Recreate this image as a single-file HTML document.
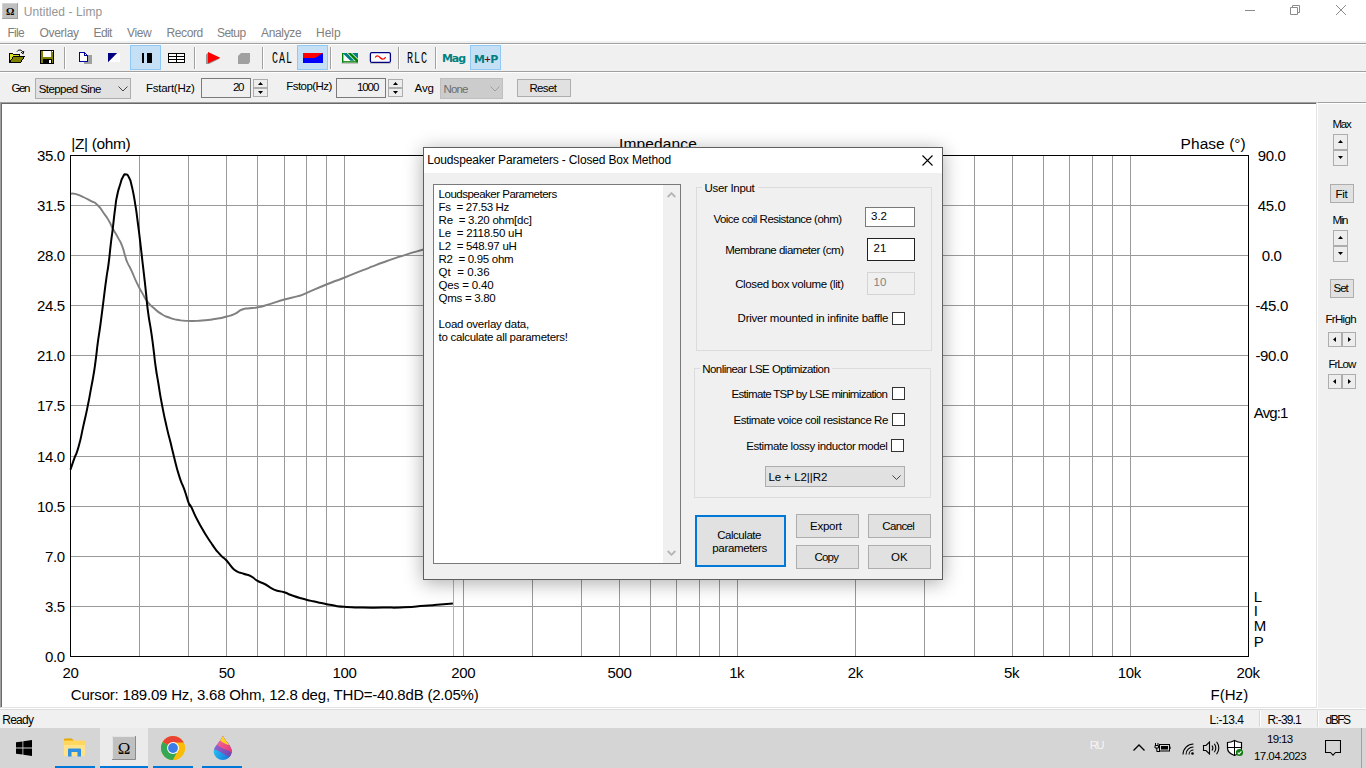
<!DOCTYPE html>
<html lang="en"><head><meta charset="utf-8"><title>Untitled - Limp</title>
<style>
html,body{margin:0;padding:0}
body{width:1366px;height:768px;overflow:hidden;position:relative;background:#f0f0f0;font-family:"Liberation Sans",sans-serif;color:#000}
div,span,svg{position:absolute;box-sizing:border-box}
.t{line-height:0;white-space:pre}
.btn{background:#e1e1e1;border:1px solid #adadad}
.spin{background:#ededed}
.sep{width:1px;background:#a0a0a0;border-right:1px solid #fff;box-sizing:content-box}
.pressed{background:#c5dff4;border:1px solid #90c8f6}
.edit{background:#fff;border:1px solid #7a7a7a}
.chk{width:13px;height:13px;background:#fff;border:1px solid #333}
.grp{border:1px solid #dcdcdc}
</style></head><body>

<div id="titlebar" style="left:0;top:0;width:1366px;height:22px;background:#fff">
<svg style="left:2px;top:3px" width="16" height="16" viewBox="0 0 16 16"><rect width="16" height="16" fill="#c0c0c0"/><path d="M0 16V0H16" fill="none" stroke="#dfdfdf" stroke-width="1"/><path d="M16 0V16H0" fill="none" stroke="#808080" stroke-width="1"/><text x="8.1" y="12" font-family="Liberation Serif,serif" font-size="10.5" font-weight="bold" text-anchor="middle" fill="#000">Ω</text></svg>
<span class="t" style="left:23.80px;top:12px;font-size:12px;letter-spacing:0.072px;color:#959595;">Untitled - Limp</span>
<svg style="left:1230px;top:0" width="136" height="22" viewBox="0 0 136 22" fill="none" stroke="#8c8c8c" stroke-width="1"><path d="M15 10.5H25"/><path d="M60.5 7.5H67.5V14.5H60.5Z M62.5 7.5V5.5H69.5V12.5H67.5"/><path d="M106 5L116 15M116 5L106 15"/></svg>
</div>
<div id="menubar" style="left:0;top:22px;width:1366px;height:19px;background:#fff">
<span class="t" style="left:7.50px;top:11px;font-size:12px;letter-spacing:-0.721px;color:#808080;">File</span>
<span class="t" style="left:39.50px;top:11px;font-size:12px;letter-spacing:-0.307px;color:#808080;">Overlay</span>
<span class="t" style="left:93.50px;top:11px;font-size:12px;letter-spacing:-0.615px;color:#808080;">Edit</span>
<span class="t" style="left:127.00px;top:11px;font-size:12px;letter-spacing:-0.376px;color:#808080;">View</span>
<span class="t" style="left:166.50px;top:11px;font-size:12px;letter-spacing:-0.402px;color:#808080;">Record</span>
<span class="t" style="left:217.00px;top:11px;font-size:12px;letter-spacing:-0.546px;color:#808080;">Setup</span>
<span class="t" style="left:261.00px;top:11px;font-size:12px;letter-spacing:-0.336px;color:#808080;">Analyze</span>
<span class="t" style="left:316.00px;top:11px;font-size:12px;color:#808080;">Help</span>
</div>
<div id="toolbar1" style="left:0;top:43px;width:1366px;height:29px;border-top:1px solid #a0a0a0;border-bottom:1px solid #a0a0a0;background:#f0f0f0;box-shadow:inset 0 1px 0 #fff">
<div class="pressed" style="left:130px;top:1px;width:31px;height:25px;"></div>
<div class="pressed" style="left:297px;top:1px;width:31px;height:25px;"></div>
<div class="pressed" style="left:470px;top:1px;width:31px;height:25px;"></div>
<div class="sep" style="left:64px;top:3px;height:22px"></div>
<div class="sep" style="left:194px;top:3px;height:22px"></div>
<div class="sep" style="left:262px;top:3px;height:22px"></div>
<div class="sep" style="left:330px;top:3px;height:22px"></div>
<div class="sep" style="left:398px;top:3px;height:22px"></div>
<div class="sep" style="left:435px;top:3px;height:22px"></div>
<svg style="left:0;top:-1px" width="520" height="29" viewBox="0 43 520 29" shape-rendering="crispEdges">
<path d="M9.5 61.5V53.5H12.5L13.5 54.500H19.500V56.500" fill="#d8e020" stroke="#000"/><path d="M9.5 62.5L13.5 56.5H24.5L20.5 62.5Z" fill="#808000" stroke="#000"/><path d="M17 51.500C18.500 49.500 21.500 49.500 22.800 52M21 52.200L23.200 53.800L23.800 51" fill="none" stroke="#000" shape-rendering="auto"/>
<rect x="40.5" y="50.5" width="13" height="13" fill="#808000" stroke="#000"/><rect x="43" y="51" width="8" height="5.500" fill="#fff"/><rect x="43" y="58.500" width="9" height="5" fill="#000"/><rect x="49" y="59.700" width="2.200" height="3" fill="#fff"/><rect x="52" y="51" width="1" height="1" fill="#fff"/>
<rect x="83.500" y="54.500" width="8.500" height="9.500" fill="#a0a0a0"/><path d="M79.5 52.5H84.5L87.5 55.5V61.5H79.5Z" fill="#fff" stroke="#0000a0" stroke-width="1.200"/><path d="M84.5 52.5V55.5H87.5" fill="none" stroke="#0000a0"/>
<rect x="108" y="53" width="12" height="9.300" fill="#fff"/><path d="M108 53H117.200L108 62.300Z" fill="#000080" shape-rendering="auto"/>
<rect x="142" y="53" width="2.200" height="10" fill="#000"/><rect x="147.200" y="53" width="5" height="10" fill="#000"/>
<rect x="168" y="53" width="17" height="10" fill="#000"/>
<rect x="169.2" y="54.2" width="6.600" height="1.600" fill="#fff"/>
<rect x="177.39999999999998" y="54.2" width="6.600" height="1.600" fill="#fff"/>
<rect x="169.2" y="57.2" width="6.600" height="1.600" fill="#fff"/>
<rect x="177.39999999999998" y="57.2" width="6.600" height="1.600" fill="#fff"/>
<rect x="169.2" y="60.2" width="6.600" height="1.600" fill="#fff"/>
<rect x="177.39999999999998" y="60.2" width="6.600" height="1.600" fill="#fff"/>
<path d="M206 54.500L208.300 52.500L220 58.500L209 64H206Z" fill="#909898" shape-rendering="auto"/><path d="M208 52L220.300 57.700L208 63.300Z" fill="#f00" shape-rendering="auto"/>
<path d="M238 56L241 53H250V62L248.500 64H238Z" fill="#a0a0a0" shape-rendering="auto"/>
<rect x="303" y="53" width="20" height="6" fill="#f00"/><path d="M303 58H315L322 53.500H323V63H303Z" fill="#00f" shape-rendering="auto"/>
<g shape-rendering="auto"><rect x="342" y="53" width="16" height="9.500" fill="#fff"/><path d="M342.500 53H346.800L354.500 60.800H350.300Z" fill="#008080"/><path d="M352 53H358V58.800Z" fill="#008080"/><path d="M347.800 53H351L358 59.800V62.600H357Z" fill="#008000"/><rect x="342" y="53" width="1.400" height="9.600" fill="#008000"/><rect x="342" y="61.200" width="16" height="1.400" fill="#008000"/><path d="M341.500 63.300H358" stroke="#a8a8a8" stroke-width="0.800"/></g>
<g shape-rendering="auto"><path d="M370 63.400H390.500" stroke="#b0b0b0" stroke-width="0.800"/><rect x="370.400" y="52.600" width="20" height="9.800" rx="1.500" fill="#fff" stroke="#000080" stroke-width="1.300"/><path d="M375.300 57.600C376.300 55.300 378 55.300 380 57.500S384 60 385.600 57" fill="none" stroke="#f00" stroke-width="1.300"/></g>
</svg>
<span class="t" style="left:271.80px;top:15px;font-size:16.5px;transform:scaleX(0.6062);transform-origin:0 0;letter-spacing:1.6px;font-family:'Liberation Mono',monospace;">CAL</span>
<span class="t" style="left:407.09px;top:15px;font-size:16.5px;transform:scaleX(0.6093);transform-origin:0 0;letter-spacing:1.6px;font-family:'Liberation Mono',monospace;">RLC</span>
<span class="t" style="left:442.00px;top:15px;font-size:11px;letter-spacing:-1.085px;color:#008080;font-weight:bold;font-family:'DejaVu Sans',sans-serif;">Mag</span>
<span class="t" style="left:473.90px;top:15px;font-size:11px;font-weight:bold;color:#008080;font-family:'DejaVu Sans',sans-serif;letter-spacing:-0.8px">M<span style="position:static;color:#800000;font-size:8.5px;vertical-align:0.5px;letter-spacing:-1px">+</span>P</span>
</div>
<div id="toolbar2" style="left:0;top:72px;width:1366px;height:30px;background:#f0f0f0;box-shadow:inset 0 1px 0 #fff">
<span class="t" style="left:11.50px;top:16px;font-size:11.5px;letter-spacing:-1.420px;">Gen</span>
<div class="btn" style="left:35px;top:6px;width:96px;height:21px;"><span class="t" style="left:2.75px;top:10px;font-size:11.5px;letter-spacing:-0.583px;">Stepped Sine</span><svg style="left:82px;top:7px" width="10" height="6" viewBox="0 0 10 6"><path d="M0.5 0.5L5 5L9.5 0.5" fill="none" stroke="#444" stroke-width="1"/></svg></div>
<span class="t" style="left:146.00px;top:16px;font-size:11.5px;letter-spacing:-0.253px;">Fstart(Hz)</span>
<div class="edit" style="left:201px;top:6px;width:50px;height:20px;background:#f0f0f0"><span class="t" style="left:31.10px;top:8px;font-size:11.5px;letter-spacing:-1.496px;">20</span></div>
<div class="btn spin" style="left:253px;top:7px;width:15px;height:9px;"><svg style="left:4px;top:2px" width="5" height="3" viewBox="0 0 5 3"><path d="M0 3L2.5 0L5 3Z" fill="#000"/></svg></div><div class="btn spin" style="left:253px;top:16px;width:15px;height:9px;"><svg style="left:4px;top:2px" width="5" height="3" viewBox="0 0 5 3"><path d="M0 0L2.5 3L5 0Z" fill="#000"/></svg></div>
<span class="t" style="left:286.25px;top:14px;font-size:11.5px;letter-spacing:-0.549px;">Fstop(Hz)</span>
<div class="edit" style="left:336px;top:6px;width:50px;height:20px;background:#f0f0f0"><span class="t" style="left:19.90px;top:8px;font-size:11.5px;letter-spacing:-1.029px;">1000</span></div>
<div class="btn spin" style="left:388px;top:7px;width:15px;height:9px;"><svg style="left:4px;top:2px" width="5" height="3" viewBox="0 0 5 3"><path d="M0 3L2.5 0L5 3Z" fill="#000"/></svg></div><div class="btn spin" style="left:388px;top:16px;width:15px;height:9px;"><svg style="left:4px;top:2px" width="5" height="3" viewBox="0 0 5 3"><path d="M0 0L2.5 3L5 0Z" fill="#000"/></svg></div>
<span class="t" style="left:414.60px;top:16px;font-size:11.5px;letter-spacing:-0.156px;">Avg</span>
<div style="left:440px;top:6px;width:63px;height:21px;background:#ccc;border:1px solid #bfbfbf"><span class="t" style="left:2.50px;top:10px;font-size:11.5px;letter-spacing:-0.832px;color:#6d6d6d;">None</span><svg style="left:49px;top:7px" width="10" height="6" viewBox="0 0 10 6"><path d="M0.5 0.5L5 5L9.5 0.5" fill="none" stroke="#a0a0a0" stroke-width="1"/></svg></div>
<div class="btn" style="left:517px;top:7px;width:54px;height:18px;"><span class="t" style="left:11.40px;top:8px;font-size:11.5px;letter-spacing:-0.624px;">Reset</span></div>
</div>
<div id="view" style="left:0;top:102px;width:1317px;height:606px;background:#fff;border-top:1px solid #a0a0a0;border-left:1px solid #a0a0a0;border-bottom:1px solid #e3e3e3;border-right:1px solid #e3e3e3;box-shadow:inset 1px 1px 0 #696969"></div>
<svg id="plot" style="left:0;top:0" width="1317" height="708" viewBox="0 0 1317 708">
<g stroke="#9a9a9a" stroke-width="1" shape-rendering="crispEdges">
<path d="M139.5 155V656"/>
<path d="M188.5 155V656"/>
<path d="M226.5 155V656"/>
<path d="M257.5 155V656"/>
<path d="M284.5 155V656"/>
<path d="M306.5 155V656"/>
<path d="M326.5 155V656"/>
<path d="M344.5 155V656"/>
<path d="M463.5 155V656"/>
<path d="M532.5 155V656"/>
<path d="M581.5 155V656"/>
<path d="M619.5 155V656"/>
<path d="M650.5 155V656"/>
<path d="M676.5 155V656"/>
<path d="M699.5 155V656"/>
<path d="M719.5 155V656"/>
<path d="M737.5 155V656"/>
<path d="M855.5 155V656"/>
<path d="M924.5 155V656"/>
<path d="M974.5 155V656"/>
<path d="M1012.5 155V656"/>
<path d="M1043.5 155V656"/>
<path d="M1069.5 155V656"/>
<path d="M1092.5 155V656"/>
<path d="M1112.5 155V656"/>
<path d="M1130.5 155V656"/>
<path d="M70 205.5H1248"/>
<path d="M70 255.5H1248"/>
<path d="M70 305.5H1248"/>
<path d="M70 355.5H1248"/>
<path d="M70 405.5H1248"/>
<path d="M70 456.5H1248"/>
<path d="M70 506.5H1248"/>
<path d="M70 556.5H1248"/>
<path d="M70 606.5H1248"/>
</g>
<path d="M70.5 193.9C72.0 193.9 71.0 192.9 75.1 193.9C79.2 194.9 77.7 194.6 82.9 196.9C88.1 199.2 85.9 198.2 90.7 200.8C95.5 203.4 92.9 200.6 97.2 204.7C101.6 208.8 99.9 207.8 103.8 213.2C107.7 218.6 106.0 215.8 109.0 221.0C112.0 226.2 109.9 223.2 112.9 228.8C115.9 234.4 115.1 232.3 118.1 237.9C121.1 243.5 119.6 239.6 122.0 245.7C124.4 251.8 123.4 250.5 125.2 256.1C127.0 261.7 125.3 257.6 127.4 262.5C129.5 267.4 128.4 263.9 131.6 270.9C134.8 277.9 133.4 275.8 137.1 283.4C140.8 291.0 139.2 287.6 142.6 293.6C146.0 299.6 143.6 296.7 147.2 301.4C150.9 306.1 148.8 303.5 153.5 307.7C158.2 311.9 156.1 310.6 161.3 313.9C166.5 317.2 163.9 315.6 169.1 317.5C174.3 319.4 170.5 318.6 176.9 319.7C183.3 320.8 179.8 320.6 188.2 320.9C196.6 321.2 192.5 321.2 202.0 320.5C211.5 319.8 208.4 320.0 216.6 318.7C224.8 317.4 220.6 318.1 226.7 316.5C232.8 314.9 229.7 316.1 234.9 313.8C240.1 311.4 237.3 311.3 242.2 309.5C247.1 307.7 244.3 309.0 249.5 308.3C254.7 307.6 251.1 308.7 257.8 307.3C264.5 305.9 260.9 306.7 269.7 304.1C278.5 301.5 275.2 302.1 284.3 299.5C293.4 296.9 289.8 298.5 297.1 296.4C304.4 294.3 296.5 297.1 306.3 293.1C316.1 289.1 313.6 289.7 326.4 284.5C339.2 279.3 332.5 282.3 344.7 277.5C356.9 272.7 352.6 274.3 363.0 270.2C373.4 266.1 366.0 268.8 375.8 265.1C385.6 261.4 381.9 262.8 392.3 259.2C402.7 255.6 396.5 257.5 406.9 254.3C417.3 251.1 412.4 252.6 423.4 249.5C434.4 246.4 434.5 246.5 440.0 245.0" fill="none" stroke="#808080" stroke-width="1.900" stroke-linejoin="round"/>
<path d="M70.5 469.6C71.6 466.3 71.1 467.6 73.8 459.8C76.5 452.0 75.6 457.3 78.7 446.2C81.8 435.1 80.3 439.6 83.2 426.6C86.1 413.6 84.9 419.8 87.5 407.1C90.1 394.4 89.0 399.3 91.0 388.6C93.0 377.9 91.9 384.5 93.5 375.0C95.1 365.5 94.2 371.2 95.7 360.0C97.2 348.8 96.3 353.8 98.0 341.2C99.7 328.8 98.9 336.1 100.7 322.5C102.5 308.9 101.6 315.2 103.5 300.6C105.4 286.0 104.5 291.6 106.3 278.8C108.1 265.9 107.3 273.9 108.8 262.0C110.3 250.1 109.5 254.6 110.9 243.1C112.3 231.6 111.5 239.2 112.9 227.5C114.3 215.8 113.8 218.4 115.2 208.0C116.6 197.6 115.4 203.9 117.0 196.2C118.6 188.5 118.0 191.4 120.0 185.0C122.0 178.6 120.9 180.5 122.9 177.0C124.9 173.5 123.8 174.1 125.9 174.4C128.0 174.7 127.1 173.9 129.1 177.8C131.0 181.7 129.8 177.9 131.8 186.2C133.7 194.5 133.1 191.2 135.0 202.8C136.9 214.4 135.9 208.0 137.6 221.0C139.3 234.0 138.6 228.1 140.2 241.8C141.8 255.5 141.2 250.7 142.5 262.0C143.8 273.3 142.9 265.3 144.1 275.6C145.3 285.9 144.7 280.8 146.0 292.8C147.3 304.8 146.3 298.6 148.0 311.6C149.7 324.6 149.4 319.4 151.2 331.9C153.0 344.4 152.0 337.3 153.5 349.0C155.0 360.7 154.1 355.7 155.7 367.0C157.3 378.3 156.2 370.3 158.3 383.0C160.4 395.7 159.3 390.7 162.1 405.2C164.9 419.7 163.8 414.2 166.6 426.6C169.4 439.0 168.1 432.5 170.5 442.3C172.9 452.1 170.9 444.5 173.8 455.9C176.7 467.3 175.8 465.3 179.3 476.4C182.8 487.5 181.0 480.0 184.2 489.1C187.4 498.2 186.7 497.9 189.0 503.8C191.3 509.7 187.6 500.1 191.1 506.8C194.6 513.5 192.7 511.7 199.5 523.9C206.3 536.1 204.6 533.2 211.4 543.3C218.2 553.4 214.9 548.6 219.9 554.3C224.9 559.9 222.4 556.0 226.3 560.2C230.2 564.5 228.2 563.3 231.7 567.0C235.2 570.7 232.8 569.0 236.8 571.3C240.8 573.6 238.8 572.1 243.6 573.8C248.4 575.5 246.7 574.0 251.2 576.3C255.7 578.6 252.3 577.9 257.1 580.6C261.9 583.3 260.0 581.5 265.6 584.5C271.2 587.5 267.8 587.0 274.0 589.6C280.2 592.2 278.5 590.5 284.2 592.3C289.9 594.1 285.4 593.0 291.0 595.0C296.6 597.0 294.3 596.3 301.1 598.3C307.9 600.3 304.5 599.3 311.3 600.9C318.1 602.5 314.6 601.7 321.4 603.1C328.2 604.5 324.1 603.9 331.6 605.1C339.1 606.3 333.8 606.0 344.0 606.8C354.2 607.6 349.3 607.3 362.3 607.6C375.3 607.9 369.2 607.7 383.1 607.6C397.0 607.5 390.1 607.9 404.0 607.3C417.9 606.7 412.7 606.7 424.8 605.8C436.9 604.9 431.0 605.3 440.4 604.5C449.8 603.7 448.7 603.8 452.9 603.4" fill="none" stroke="#000" stroke-width="2" stroke-linejoin="round"/>
<path d="M453.5 155V656" stroke="#c8c800" stroke-width="1" shape-rendering="crispEdges"/>
<rect x="70.5" y="155.5" width="1178" height="501" fill="none" stroke="#000" stroke-width="1" shape-rendering="crispEdges"/>
</svg>
<div id="plotlabels" style="left:0;top:0;width:0;height:0">
<span class="t" style="left:71.25px;top:144px;font-size:15.5px;letter-spacing:-0.349px;">|Z| (ohm)</span>
<span class="t" style="left:619.00px;top:144px;font-size:15.5px;letter-spacing:0.148px;">Impedance</span>
<span class="t" style="left:1180.60px;top:144px;font-size:15.5px;letter-spacing:0.048px;">Phase (°)</span>
<span class="t" style="left:36.95px;top:156px;font-size:15px;letter-spacing:-0.350px;">35.0</span>
<span class="t" style="left:36.95px;top:206px;font-size:15px;letter-spacing:-0.350px;">31.5</span>
<span class="t" style="left:36.95px;top:256px;font-size:15px;letter-spacing:-0.350px;">28.0</span>
<span class="t" style="left:36.95px;top:306px;font-size:15px;letter-spacing:-0.350px;">24.5</span>
<span class="t" style="left:36.95px;top:356px;font-size:15px;letter-spacing:-0.350px;">21.0</span>
<span class="t" style="left:36.95px;top:406px;font-size:15px;letter-spacing:-0.350px;">17.5</span>
<span class="t" style="left:36.95px;top:457px;font-size:15px;letter-spacing:-0.350px;">14.0</span>
<span class="t" style="left:36.95px;top:507px;font-size:15px;letter-spacing:-0.350px;">10.5</span>
<span class="t" style="left:44.94px;top:557px;font-size:15px;letter-spacing:-0.350px;">7.0</span>
<span class="t" style="left:44.94px;top:607px;font-size:15px;letter-spacing:-0.350px;">3.5</span>
<span class="t" style="left:44.94px;top:657px;font-size:15px;letter-spacing:-0.350px;">0.0</span>
<span class="t" style="left:1257.80px;top:156px;font-size:15px;letter-spacing:-0.350px;">90.0</span>
<span class="t" style="left:1257.80px;top:206px;font-size:15px;letter-spacing:-0.350px;">45.0</span>
<span class="t" style="left:1261.80px;top:256px;font-size:15px;letter-spacing:-0.350px;">0.0</span>
<span class="t" style="left:1255.48px;top:306px;font-size:15px;letter-spacing:-0.350px;">-45.0</span>
<span class="t" style="left:1255.48px;top:356px;font-size:15px;letter-spacing:-0.350px;">-90.0</span>
<span class="t" style="left:1253.80px;top:413px;font-size:15px;letter-spacing:-0.886px;">Avg:1</span>
<span class="t" style="left:1253.80px;top:597px;font-size:15px;">L</span>
<span class="t" style="left:1253.80px;top:611px;font-size:15px;">I</span>
<span class="t" style="left:1253.80px;top:626px;font-size:15px;">M</span>
<span class="t" style="left:1253.80px;top:642px;font-size:15px;">P</span>
<span class="t" style="left:62.50px;top:673px;font-size:15px;letter-spacing:-0.350px;">20</span>
<span class="t" style="left:218.76px;top:673px;font-size:15px;letter-spacing:-0.350px;">50</span>
<span class="t" style="left:332.47px;top:673px;font-size:15px;letter-spacing:-0.350px;">100</span>
<span class="t" style="left:451.17px;top:673px;font-size:15px;letter-spacing:-0.350px;">200</span>
<span class="t" style="left:607.43px;top:673px;font-size:15px;letter-spacing:-0.350px;">500</span>
<span class="t" style="left:729.13px;top:673px;font-size:15px;letter-spacing:-0.350px;">1k</span>
<span class="t" style="left:847.84px;top:673px;font-size:15px;letter-spacing:-0.350px;">2k</span>
<span class="t" style="left:1004.09px;top:673px;font-size:15px;letter-spacing:-0.350px;">5k</span>
<span class="t" style="left:1117.80px;top:673px;font-size:15px;letter-spacing:-0.350px;">10k</span>
<span class="t" style="left:1236.51px;top:673px;font-size:15px;letter-spacing:-0.350px;">20k</span>
<span class="t" style="left:70.80px;top:695px;font-size:15px;letter-spacing:-0.204px;">Cursor: 189.09 Hz, 3.68 Ohm, 12.8 deg, THD=-40.8dB (2.05%)</span>
<span class="t" style="left:1210.40px;top:695px;font-size:15px;letter-spacing:0.077px;">F(Hz)</span>
</div>
<div id="rightpanel" style="left:1317px;top:102px;width:49px;height:606px;background:#f0f0f0;border-left:1px solid #fff;border-top:1px solid #a0a0a0;box-shadow:inset 0 1px 0 #fff">
<span class="t" style="left:14.50px;top:21px;font-size:11.5px;letter-spacing:-1.238px;">Max</span>
<div class="btn spin" style="left:15px;top:31px;width:15px;height:16px;"><svg style="left:4px;top:5px" width="5" height="3" viewBox="0 0 5 3"><path d="M0 3L2.5 0L5 3Z" fill="#000"/></svg></div><div class="btn spin" style="left:15px;top:47px;width:15px;height:16px;"><svg style="left:4px;top:5px" width="5" height="3" viewBox="0 0 5 3"><path d="M0 0L2.5 3L5 0Z" fill="#000"/></svg></div>
<div class="btn" style="left:12px;top:81px;width:24px;height:19px;"><span class="t" style="left:4.60px;top:9px;font-size:11.5px;letter-spacing:-0.340px;">Fit</span></div>
<span class="t" style="left:14.50px;top:117px;font-size:11.5px;letter-spacing:-1.317px;">Min</span>
<div class="btn spin" style="left:15px;top:127px;width:15px;height:16px;"><svg style="left:4px;top:5px" width="5" height="3" viewBox="0 0 5 3"><path d="M0 3L2.5 0L5 3Z" fill="#000"/></svg></div><div class="btn spin" style="left:15px;top:143px;width:15px;height:16px;"><svg style="left:4px;top:5px" width="5" height="3" viewBox="0 0 5 3"><path d="M0 0L2.5 3L5 0Z" fill="#000"/></svg></div>
<div class="btn" style="left:12px;top:176px;width:24px;height:19px;"><span class="t" style="left:2.60px;top:8px;font-size:11.5px;letter-spacing:-1.083px;">Set</span></div>
<span class="t" style="left:7.40px;top:216px;font-size:11.5px;letter-spacing:-0.642px;">FrHigh</span>
<div class="btn spin" style="left:10px;top:229px;width:14px;height:15px;"><svg style="left:4px;top:4px" width="3" height="5" viewBox="0 0 3 5"><path d="M3 0L0 2.5L3 5Z" fill="#000"/></svg></div><div class="btn spin" style="left:24px;top:229px;width:14px;height:15px;"><svg style="left:5px;top:4px" width="3" height="5" viewBox="0 0 3 5"><path d="M0 0L3 2.5L0 5Z" fill="#000"/></svg></div>
<span class="t" style="left:10.40px;top:261px;font-size:11.5px;letter-spacing:-1.036px;">FrLow</span>
<div class="btn spin" style="left:10px;top:271px;width:14px;height:15px;"><svg style="left:4px;top:4px" width="3" height="5" viewBox="0 0 3 5"><path d="M3 0L0 2.5L3 5Z" fill="#000"/></svg></div><div class="btn spin" style="left:24px;top:271px;width:14px;height:15px;"><svg style="left:5px;top:4px" width="3" height="5" viewBox="0 0 3 5"><path d="M0 0L3 2.5L0 5Z" fill="#000"/></svg></div>
</div>
<div id="statusbar" style="left:0;top:708px;width:1366px;height:20px;background:#f0f0f0;border-top:1px solid #fff;box-shadow:inset 0 1px 0 #dcdcdc">
<span class="t" style="left:2.30px;top:11px;font-size:12px;letter-spacing:-0.772px;">Ready</span>
<span class="t" style="left:1209.50px;top:11px;font-size:12px;letter-spacing:-0.481px;">L:-13.4</span>
<div style="left:1259px;top:2px;width:1px;height:16px;background:#d7d7d7;box-shadow:1px 0 0 #fff"></div>
<span class="t" style="left:1267.50px;top:11px;font-size:12px;letter-spacing:-0.863px;">R:-39.1</span>
<div style="left:1317px;top:2px;width:1px;height:16px;background:#d7d7d7;box-shadow:1px 0 0 #fff"></div>
<span class="t" style="left:1325.50px;top:11px;font-size:12px;letter-spacing:-1.503px;">dBFS</span>
</div>
<div id="taskbar" style="left:0;top:728px;width:1366px;height:40px;background:#d5d5d5">
<div style="left:100px;top:0px;width:48px;height:40px;background:#ebebeb"></div>
<div style="left:55px;top:38px;width:40px;height:2px;background:#0078d7"></div>
<div style="left:100px;top:38px;width:48px;height:2px;background:#0078d7"></div>
<div style="left:153px;top:38px;width:40px;height:2px;background:#0078d7"></div>
<div style="left:202px;top:38px;width:40px;height:2px;background:#0078d7"></div>
<svg style="left:16px;top:12px" width="16" height="16" viewBox="0 0 16 16"><path d="M0 2.3L6.5 1.4V7.6H0Z M7.3 1.3L16 0V7.6H7.3Z M0 8.4H6.5V14.6L0 13.7Z M7.3 8.4H16V16L7.3 14.7Z" fill="#000"/></svg>
<svg style="left:64px;top:10px" width="21" height="19" viewBox="0 0 21 19"><path d="M0 1.5Q0 0.5 1 0.5H8L10 3H0Z" fill="#e8a800"/><rect x="0" y="2.5" width="21" height="15.5" rx="1" fill="#ffd75e"/><path d="M0 7H21V17Q21 18 20 18H1Q0 18 0 17Z" fill="#ffe28a"/><path d="M4 18.5V11.5Q4 10.5 5 10.5H16Q17 10.5 17 11.5V18.5H13.5V14H7.5V18.5Z" fill="#2f8fe0"/></svg>
<svg style="left:112px;top:8px" width="24" height="24" viewBox="0 0 24 24"><rect width="24" height="24" fill="#c0c0c0"/><path d="M0.5 24V0.5H24" fill="none" stroke="#e4e4e4"/><path d="M23.5 0V23.5H0" fill="none" stroke="#8a8a8a"/><text x="12" y="18" font-family="Liberation Serif,serif" font-size="17" text-anchor="middle" fill="#000">Ω</text></svg>
<svg style="left:161px;top:8px" width="24" height="24" viewBox="0 0 24 24"><circle cx="12" cy="12" r="12" fill="#fbbc05"/><path d="M12 12L1.6 6A12 12 0 0 1 22.4 6Z" fill="#ea4335"/><path d="M12 12L1.6 6A12 12 0 0 0 12 24L17.2 15Z" fill="#34a853"/><path d="M12 12H22.4A12 12 0 0 0 22.4 6H12Z" fill="#ea4335"/><path d="M12 6.5H22.6A12 12 0 0 1 12 24L16.8 14.8Z" fill="#fbbc05"/><circle cx="12" cy="12" r="6" fill="#fff"/><circle cx="12" cy="12" r="4.900" fill="#3b7de8"/></svg>
<svg style="left:212.500px;top:7.600px" width="19.500" height="25.300" viewBox="0 0 20 26"><defs><clipPath id="dropclip"><path d="M11 0.500C11.500 5 19.500 9.500 19.300 16.500A9.400 9.200 0 0 1 0.600 16.500C0.600 10.500 8.500 5.500 9.500 0.800Q10.300 0 11 0.500Z"/></clipPath><linearGradient id="dropblue" x1="0" y1="0" x2="1" y2="0.600"><stop offset="0" stop-color="#2fd8fa"/><stop offset="1" stop-color="#1478dc"/></linearGradient><linearGradient id="droppurple" x1="0" y1="0" x2="1" y2="0.500"><stop offset="0" stop-color="#a06ad8"/><stop offset="1" stop-color="#7448b0"/></linearGradient><linearGradient id="droppink" x1="0" y1="0" x2="1" y2="0.500"><stop offset="0" stop-color="#f07aa8"/><stop offset="1" stop-color="#e83c78"/></linearGradient></defs><g clip-path="url(#dropclip)"><rect width="20" height="26" fill="url(#dropblue)"/><path d="M-1 13.500C4 13.500 8 17 12 19S17 22 21 24V0H-1Z" fill="url(#droppurple)"/><path d="M-1 8C5 8.500 8 12 12 13.500S18 15.500 21 19V0H-1Z" fill="url(#droppink)"/><path d="M5 3C8 5 11 7.500 16 9.500V0H5Z" fill="#ffd21e"/></g></svg>
<span class="t" style="left:1089.80px;top:17px;font-size:11.5px;letter-spacing:-1.805px;color:#f4f4f4;">RU</span>
<svg style="left:1130px;top:10px" width="120" height="22" viewBox="1130 738 120 22" fill="none" stroke="#000" stroke-width="1.3"><path d="M1133.5 750.5L1139 745L1144.5 750.5"/><rect x="1159.500" y="744.5" width="10" height="6.5" stroke-width="1"/><rect x="1161" y="746" width="7" height="3.5" fill="#000" stroke="none"/><path d="M1170 746.5V749" stroke-width="1.2"/><path d="M1155.500 743V745M1158 743V745M1155 745.500H1158.500V748H1155ZM1156.800 748V751.500H1160" stroke-width="1"/><path d="M1183 754.500A10.500 10.500 0 0 1 1193.500 744M1186 754.500A7.500 7.500 0 0 1 1193.500 747M1189 754.500A4.500 4.500 0 0 1 1193.500 750" stroke-width="1.1"/><circle cx="1192.500" cy="753.500" r="1.3" fill="#000" stroke="none"/><path d="M1203.500 745.500H1206L1209.500 742V754L1206 750.500H1203.500Z" stroke-width="1.1"/><path d="M1212 745.500Q1213.800 748 1212 750.500M1214.300 743.700Q1217.300 748 1214.300 752.300M1216.600 741.800Q1221 748 1216.600 754.200" stroke-width="1.1"/><path d="M1234.500 740.500Q1238 742.500 1241.500 742.500V748Q1241.500 753 1234.500 755.500Q1227.500 753 1227.500 748V742.500Q1231 742.500 1234.500 740.500Z" fill="#fff" stroke-width="1.2"/><path d="M1234.500 741V755M1228 747.500H1241" stroke-width="1"/><circle cx="1239.500" cy="752.500" r="3.6" fill="#107c10" stroke="none"/><path d="M1237.700 752.600L1239 753.900L1241.400 751.300" stroke="#fff" stroke-width="1.1"/></svg>
<span class="t" style="left:1267.00px;top:11px;font-size:11.5px;letter-spacing:-0.646px;">19:13</span>
<span class="t" style="left:1254.00px;top:28px;font-size:11.5px;letter-spacing:-0.551px;">17.04.2023</span>
<svg style="left:1325px;top:12px" width="16" height="16" viewBox="0 0 16 16"><path d="M0.5 0.5H15.500V12.500H10.500L8 15.200L5.500 12.500H0.500Z" fill="none" stroke="#000" stroke-width="1.1"/></svg>
<div style="left:1361px;top:0px;width:1px;height:40px;background:#a0a0a0"></div>
</div>
<div id="dialog" style="left:423px;top:147px;width:520px;height:433px;background:#f0f0f0;border:1px solid #5f5f5f;box-shadow:0 3px 18px rgba(0,0,0,.33)">
<div style="left:0px;top:0px;width:518px;height:25px;background:#fff"></div>
<span class="t" style="left:3.20px;top:12px;font-size:12px;letter-spacing:-0.150px;">Loudspeaker Parameters - Closed Box Method</span>
<svg style="left:498px;top:7px" width="11" height="11" viewBox="0 0 11 11"><path d="M0.5 0.5L10.500 10.500M10.500 0.500L0.500 10.500" stroke="#000" stroke-width="1.1" fill="none"/></svg>
<div class="edit" style="left:9px;top:36px;width:248px;height:380px;"><span class="t" style="left:4.60px;top:9px;font-size:11.5px;letter-spacing:-0.504px;">Loudspeaker Parameters</span><span class="t" style="left:4.60px;top:22px;font-size:11.5px;letter-spacing:-0.335px;">Fs  = 27.53 Hz</span><span class="t" style="left:4.60px;top:35px;font-size:11.5px;letter-spacing:-0.247px;">Re  = 3.20 ohm[dc]</span><span class="t" style="left:4.60px;top:48px;font-size:11.5px;letter-spacing:-0.253px;">Le  = 2118.50 uH</span><span class="t" style="left:4.60px;top:61px;font-size:11.5px;letter-spacing:-0.283px;">L2  = 548.97 uH</span><span class="t" style="left:4.60px;top:74px;font-size:11.5px;letter-spacing:-0.305px;">R2  = 0.95 ohm</span><span class="t" style="left:4.60px;top:87px;font-size:11.5px;letter-spacing:0.030px;">Qt  = 0.36</span><span class="t" style="left:4.60px;top:100px;font-size:11.5px;letter-spacing:-0.165px;">Qes = 0.40</span><span class="t" style="left:4.60px;top:113px;font-size:11.5px;letter-spacing:-0.296px;">Qms = 3.80</span><span class="t" style="left:4.60px;top:139px;font-size:11.5px;letter-spacing:-0.237px;">Load overlay data,</span><span class="t" style="left:4.60px;top:152px;font-size:11.5px;letter-spacing:-0.301px;">to calculate all parameters!</span><div style="left:229px;top:0px;width:17px;height:378px;background:#f0f0f0"><svg style="left:4px;top:7px" width="9" height="6" viewBox="0 0 9 6"><path d="M0.7 5L4.5 1.2L8.3 5" fill="none" stroke="#b4b4b4" stroke-width="1.800"/></svg><svg style="left:4px;bottom:7px" width="9" height="6" viewBox="0 0 9 6"><path d="M0.7 1L4.5 4.800L8.3 1" fill="none" stroke="#b4b4b4" stroke-width="1.800"/></svg></div></div>
<div class="grp" style="left:272px;top:39px;width:236px;height:164px;"><div style="left:5px;top:-1px;width:56px;height:1px;background:#f0f0f0"></div><span class="t" style="left:7.50px;top:0px;font-size:11.5px;letter-spacing:-0.306px;">User Input</span></div>
<span class="t" style="left:289.40px;top:71px;font-size:11.5px;letter-spacing:-0.506px;">Voice coil Resistance (ohm)</span>
<div class="edit" style="left:441px;top:59px;width:50px;height:20px;"><span class="t" style="left:5.00px;top:8px;font-size:11.5px;">3.2</span></div>
<span class="t" style="left:301.20px;top:102px;font-size:11.5px;letter-spacing:-0.489px;">Membrane diameter (cm)</span>
<div class="edit" style="left:443px;top:90px;width:48px;height:23px;border-color:#222"><span class="t" style="left:5.50px;top:9px;font-size:11.5px;">21</span></div>
<span class="t" style="left:311.20px;top:136px;font-size:11.5px;letter-spacing:-0.370px;">Closed box volume (lit)</span>
<div class="edit" style="left:443px;top:124px;width:48px;height:23px;border-color:#d4d4d4;background:#f0f0f0"><span class="t" style="left:5.50px;top:9px;font-size:11.5px;color:#838383;">10</span></div>
<span class="t" style="left:313.60px;top:170px;font-size:11.5px;letter-spacing:-0.235px;">Driver mounted in infinite baffle</span>
<div class="chk" style="left:468px;top:164px"></div>
<div class="grp" style="left:270px;top:220px;width:237px;height:130px;"><div style="left:5px;top:-1px;width:132px;height:1px;background:#f0f0f0"></div><span class="t" style="left:7.20px;top:0px;font-size:11.5px;letter-spacing:-0.547px;">Nonlinear LSE Optimization</span></div>
<span class="t" style="left:307.50px;top:246px;font-size:11.5px;letter-spacing:-0.670px;">Estimate TSP by LSE minimization</span>
<div class="chk" style="left:468px;top:239px"></div>
<span class="t" style="left:309.40px;top:272px;font-size:11.5px;letter-spacing:-0.429px;">Estimate voice coil resistance Re</span>
<div class="chk" style="left:468px;top:265px"></div>
<span class="t" style="left:322.20px;top:298px;font-size:11.5px;letter-spacing:-0.396px;">Estimate lossy inductor model</span>
<div class="chk" style="left:467px;top:291px"></div>
<div class="btn" style="left:341px;top:318px;width:140px;height:21px;"><span class="t" style="left:2.50px;top:10px;font-size:11.5px;letter-spacing:-0.047px;">Le + L2||R2</span><svg style="left:126px;top:8px" width="9" height="5" viewBox="0 0 9 5"><path d="M0.5 0.5L4.5 4.500L8.500 0.500" fill="none" stroke="#444" stroke-width="1"/></svg></div>
<div class="btn" style="left:271px;top:367px;width:91px;height:52px;border:2px solid #0078d7"><span class="t" style="left:20.20px;top:18px;font-size:11.5px;letter-spacing:-0.456px;">Calculate</span><span class="t" style="left:15.30px;top:31px;font-size:11.5px;letter-spacing:-0.346px;">parameters</span></div>
<div class="btn" style="left:372px;top:366px;width:63px;height:24px;"><span class="t" style="left:13.10px;top:11px;font-size:11.5px;letter-spacing:-0.288px;">Export</span></div>
<div class="btn" style="left:444px;top:366px;width:63px;height:24px;"><span class="t" style="left:13.30px;top:11px;font-size:11.5px;letter-spacing:-0.648px;">Cancel</span></div>
<div class="btn" style="left:372px;top:397px;width:63px;height:24px;"><span class="t" style="left:17.50px;top:11px;font-size:11.5px;letter-spacing:-0.799px;">Copy</span></div>
<div class="btn" style="left:444px;top:397px;width:63px;height:24px;"><span class="t" style="left:22.00px;top:11px;font-size:11.5px;">OK</span></div>
</div>
</body></html>
